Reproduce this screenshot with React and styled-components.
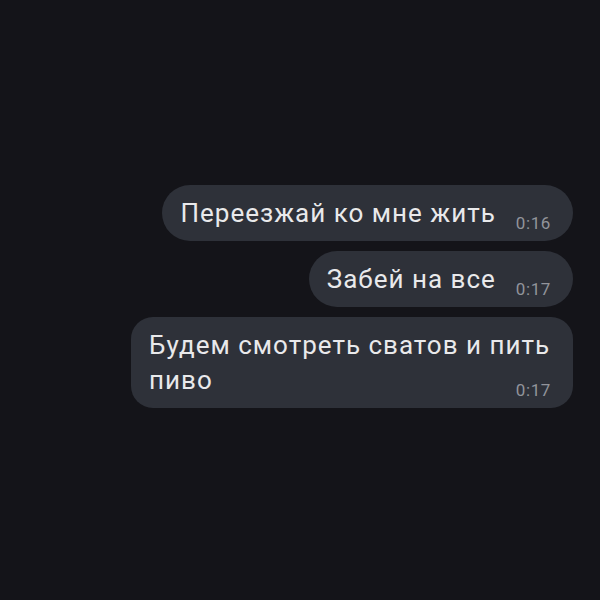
import React from 'react';
import styled, { createGlobalStyle } from 'styled-components';

const GlobalStyle = createGlobalStyle`
  html, body {
    margin: 0;
    padding: 0;
    background: #141419;
  }
  #root {
    min-height: 600px;
  }
`;

const Screen = styled.div`
  width: 600px;
  height: 600px;
  background: #141419;
  font-family: Roboto, "Liberation Sans", sans-serif;
  box-sizing: border-box;
  padding: 185px 27px 0 0;
  display: flex;
  flex-direction: column;
  align-items: flex-end;
  gap: 10px;
`;

const Bubble = styled.div`
  display: flow-root;
  max-width: 442px;
  box-sizing: border-box;
  padding: 11px 22px 10px 18px;
  background: #2e3139;
  border-radius: ${(p) => (p.$multiline ? 22 : 28)}px;
  color: #e9e9eb;
  font-size: 26px;
  line-height: 35px;
  letter-spacing: 1px;
`;

const Time = styled.span`
  float: right;
  margin: 20px 0 0 20px;
  font-size: 17px;
  line-height: 14px;
  letter-spacing: 0.6px;
  color: #92949b;
`;

const messages = [
  { text: 'Переезжай ко мне жить', time: '0:16' },
  { text: 'Забей на все', time: '0:17' },
  { text: 'Будем смотреть сватов и пить пиво', time: '0:17', multiline: true },
];

const App = () => (
  <>
    <GlobalStyle />
    <Screen>
      {messages.map((m, i) => (
        <Bubble key={i} $multiline={m.multiline}>
          {m.text}
          <Time>{m.time}</Time>
        </Bubble>
      ))}
    </Screen>
  </>
);

export default App;
